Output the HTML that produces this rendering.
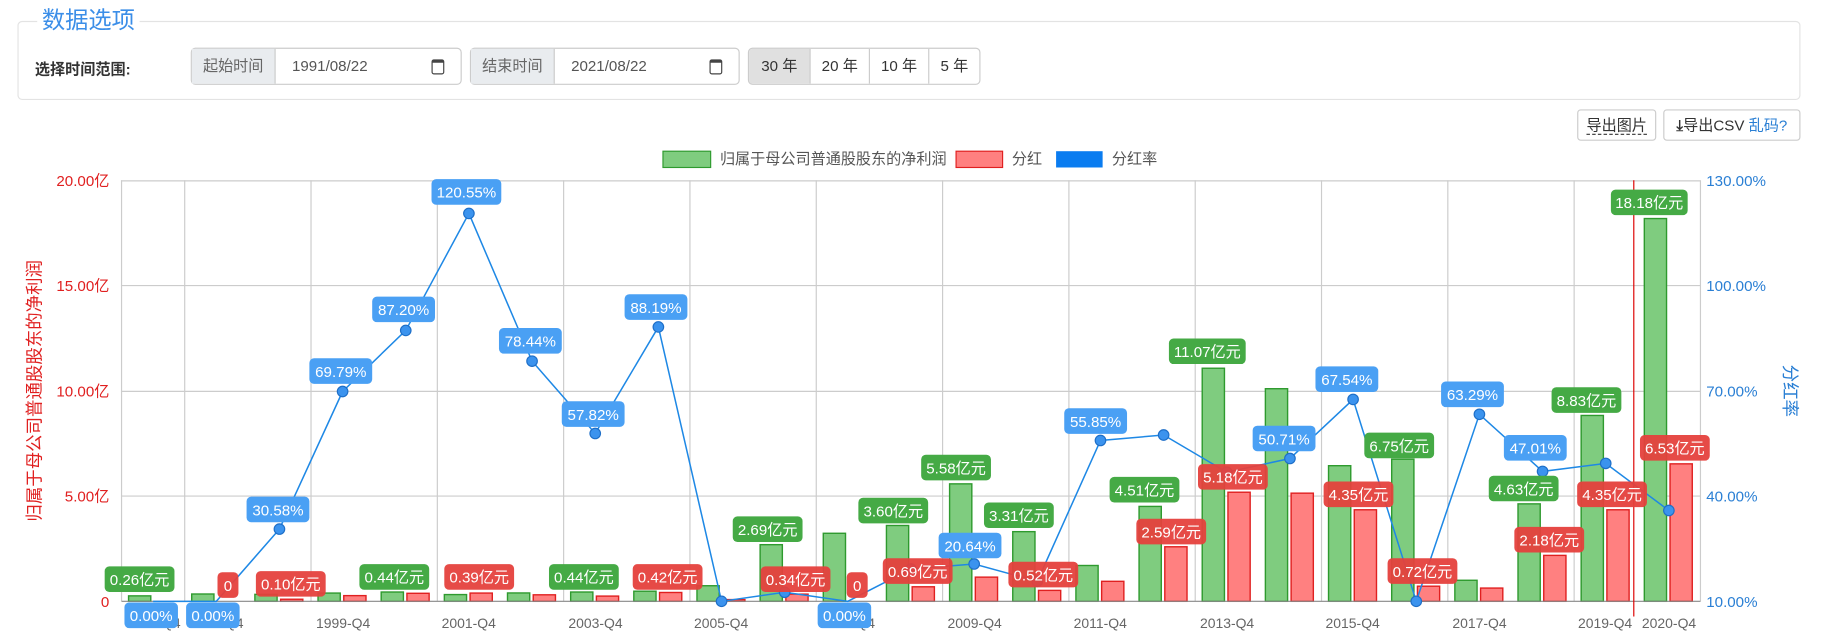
<!DOCTYPE html>
<html><head><meta charset="utf-8"><style>
*{box-sizing:border-box}
body{margin:0;background:#fff;width:1826px;height:643px;overflow:hidden;font-family:"Liberation Sans","Noto Sans CJK SC",sans-serif}
#w{position:absolute;left:0;top:0;width:1570px;height:553px;transform:scale(1.1631);transform-origin:0 0}
.fs{position:absolute;left:15px;top:18px;width:1533px;height:68px;border:1px solid #e3e3e3;border-radius:4px}
.lg{position:absolute;left:16px;top:-13px;background:#fff;padding:0 4px;color:#3b8ee8;font-size:20px;line-height:24px}
.lbl{position:absolute;left:30px;top:48px;font-size:13px;font-weight:bold;color:#333}
.ig{position:absolute;top:41px;height:32px;border:1px solid #ccc;border-radius:4px;display:flex;font-size:13px;color:#555;background:#fff}
.ig .a{background:#e9ecef;border-right:1px solid #ccc;width:72px;text-align:center;line-height:30px;color:#666}
.ig .v{padding-left:14px;line-height:30px;flex:1;position:relative}
.cal{position:absolute;right:14px;top:9px;width:11px;height:13px;border:1.5px solid #444;border-radius:2px;border-top-width:3px}
.bg{position:absolute;left:643px;top:41px;height:32px;display:flex;border:1px solid #ccc;border-radius:4px;overflow:hidden;font-size:13px;color:#333}
.bg div{line-height:30px;text-align:center;border-left:1px solid #ccc}
.bg div:first-child{border-left:0;background:#e0e0e0}
.btn{position:absolute;top:94px;height:27px;border:1px solid #ccc;border-radius:3px;font-size:13px;line-height:25px;color:#333;text-align:center}
</style></head><body><div id="w">
<div class="fs"><div class="lg">数据选项</div>
<div class="lbl" style="left:14px;top:30px">选择时间范围:</div></div>
<div class="ig" style="left:164px;width:233px"><div class="a">起始时间</div><div class="v">1991/08/22<span class="cal"></span></div></div>
<div class="ig" style="left:404px;width:232px"><div class="a">结束时间</div><div class="v">2021/08/22<span class="cal"></span></div></div>
<div class="bg"><div style="width:52px">30 年</div><div style="width:51px">20 年</div><div style="width:51px">10 年</div><div style="width:44px">5 年</div></div>
<div class="btn" style="left:1356px;width:68px"><span style="border-bottom:1px dashed #333">导出图片</span></div>
<div class="btn" style="left:1430px;width:118px"><span style="font-weight:bold">&#10515;</span>导出CSV <span style="color:#2a7fd4">乱码?</span></div>

<svg width="1570" height="553" style="position:absolute;left:0;top:0" font-family="Liberation Sans, Noto Sans CJK SC, sans-serif">
<g font-size="13" fill="#555">
<rect x="570" y="130" width="41" height="14" fill="#7fcc7f" stroke="#2e9a2e"/><text x="619" y="141">归属于母公司普通股股东的净利润</text>
<rect x="822" y="130" width="40" height="14" fill="#ff8080" stroke="#e02020"/><text x="870" y="141">分红</text>
<rect x="908" y="130" width="40" height="14" fill="#0a7cf0"/><text x="956" y="141">分红率</text>
</g>
<g stroke="#ccc" stroke-width="1">
<line x1="104" y1="155.5" x2="1462" y2="155.5"/><line x1="104" y1="245.5" x2="1462" y2="245.5"/><line x1="104" y1="336.5" x2="1462" y2="336.5"/><line x1="104" y1="426.5" x2="1462" y2="426.5"/>
</g>
<g font-size="13" fill="#e02020" text-anchor="end">
<text x="94" y="160">20.00亿</text><text x="94" y="250">15.00亿</text><text x="94" y="341">10.00亿</text><text x="94" y="431">5.00亿</text><text x="94" y="522">0</text></g>
<g font-size="13" fill="#2a7fd4"><text x="1467" y="160">130.00%</text><text x="1467" y="250">100.00%</text><text x="1467" y="341">70.00%</text><text x="1467" y="431">40.00%</text><text x="1467" y="522">10.00%</text></g>
<text transform="translate(35,336) rotate(-90)" text-anchor="middle" font-size="15" fill="#e02020">归属于母公司普通股股东的净利润</text>
<text transform="translate(1534,336) rotate(90)" text-anchor="middle" font-size="15" fill="#2a7fd4">分红率</text>
<g transform="translate(104.5,0) scale(1.00556,1) translate(-105,0)">
<g stroke="#ccc"><line x1="105" y1="155" x2="105" y2="517"/><line x1="159" y1="155" x2="159" y2="517"/><line x1="267" y1="155" x2="267" y2="517"/><line x1="375" y1="155" x2="375" y2="517"/><line x1="483" y1="155" x2="483" y2="517"/><line x1="591" y1="155" x2="591" y2="517"/><line x1="699" y1="155" x2="699" y2="517"/><line x1="807" y1="155" x2="807" y2="517"/><line x1="915" y1="155" x2="915" y2="517"/><line x1="1023" y1="155" x2="1023" y2="517"/><line x1="1131" y1="155" x2="1131" y2="517"/><line x1="1239" y1="155" x2="1239" y2="517"/><line x1="1347" y1="155" x2="1347" y2="517"/><line x1="1455" y1="155" x2="1455" y2="517"/></g>
<g fill="#7fcc7f" stroke="#2e9a2e" stroke-width="1.2">
<rect x="111" y="512.3" width="19" height="4.7"/><rect x="165" y="510.7" width="19" height="6.3"/><rect x="219" y="511" width="19" height="6"/><rect x="273" y="509.9" width="19" height="7.1"/><rect x="327" y="509" width="19" height="8"/><rect x="381" y="511.2" width="19" height="5.8"/><rect x="435" y="509.8" width="19" height="7.2"/><rect x="489" y="509" width="19" height="8"/><rect x="543" y="508.3" width="19" height="8.7"/><rect x="597" y="503.6" width="19" height="13.4"/><rect x="651" y="468.3" width="19" height="48.7"/><rect x="705" y="458.5" width="19" height="58.5"/><rect x="759" y="451.8" width="19" height="65.2"/><rect x="813" y="416" width="19" height="101"/><rect x="867" y="457.1" width="19" height="59.9"/><rect x="921" y="486.2" width="19" height="30.8"/><rect x="975" y="435.4" width="19" height="81.6"/><rect x="1029" y="316.6" width="19" height="200.4"/><rect x="1083" y="334.2" width="19" height="182.8"/><rect x="1137" y="400.4" width="19" height="116.6"/><rect x="1191" y="394.8" width="19" height="122.2"/><rect x="1245" y="498.9" width="19" height="18.1"/><rect x="1299" y="433.2" width="19" height="83.8"/><rect x="1353" y="357.2" width="19" height="159.8"/><rect x="1407" y="187.9" width="19" height="329.1"/>
</g>
<g fill="#ff8080" stroke="#e02020" stroke-width="1.2">
<rect x="241" y="515.2" width="19" height="1.8"/><rect x="295" y="512.1" width="19" height="4.9"/><rect x="349" y="510.1" width="19" height="6.9"/><rect x="403" y="509.9" width="19" height="7.1"/><rect x="457" y="511.4" width="19" height="5.6"/><rect x="511" y="512.5" width="19" height="4.5"/><rect x="565" y="509.4" width="19" height="7.6"/><rect x="619" y="515.5" width="19" height="1.5"/><rect x="673" y="510.8" width="19" height="6.2"/><rect x="781" y="504.5" width="19" height="12.5"/><rect x="835" y="496.2" width="19" height="20.8"/><rect x="889" y="507.6" width="19" height="9.4"/><rect x="943" y="499.8" width="19" height="17.2"/><rect x="997" y="470.1" width="19" height="46.9"/><rect x="1051" y="423.2" width="19" height="93.8"/><rect x="1105" y="424" width="19" height="93"/><rect x="1159" y="438.3" width="19" height="78.7"/><rect x="1213" y="504" width="19" height="13"/><rect x="1267" y="505.6" width="19" height="11.4"/><rect x="1321" y="477.5" width="19" height="39.5"/><rect x="1375" y="438.3" width="19" height="78.7"/><rect x="1429" y="398.8" width="19" height="118.2"/>
</g>
<line x1="105" y1="517" x2="1455" y2="517" stroke="#888"/>
<line x1="1398" y1="155" x2="1398" y2="530" stroke="#d00" stroke-width="1"/>
<polyline fill="none" stroke="#1e88e5" stroke-width="1.3" points="132,517 186,517 240,454.9 294,336.6 348,284.1 402,183.5 456,310.5 510,372.7 564,281.1 618,517 672,509.2 726,517 780,489.2 834,484.9 888,499.8 942,378.7 996,374 1050,406 1104,394.2 1158,343.4 1212,517 1266,356.2 1320,405.3 1374,398.4 1428,438.9"/>
<g fill="#3b93ee" stroke="#1e6fc8"><circle cx="240" cy="454.9" r="4.5"/><circle cx="294" cy="336.6" r="4.5"/><circle cx="348" cy="284.1" r="4.5"/><circle cx="402" cy="183.5" r="4.5"/><circle cx="456" cy="310.5" r="4.5"/><circle cx="510" cy="372.7" r="4.5"/><circle cx="564" cy="281.1" r="4.5"/><circle cx="618" cy="517" r="4.5"/><circle cx="672" cy="509.2" r="4.5"/><circle cx="780" cy="489.2" r="4.5"/><circle cx="834" cy="484.9" r="4.5"/><circle cx="888" cy="499.8" r="4.5"/><circle cx="942" cy="378.7" r="4.5"/><circle cx="996" cy="374" r="4.5"/><circle cx="1050" cy="406" r="4.5"/><circle cx="1104" cy="394.2" r="4.5"/><circle cx="1158" cy="343.4" r="4.5"/><circle cx="1212" cy="517" r="4.5"/><circle cx="1266" cy="356.2" r="4.5"/><circle cx="1320" cy="405.3" r="4.5"/><circle cx="1374" cy="398.4" r="4.5"/><circle cx="1428" cy="438.9" r="4.5"/></g>
</g>
<g font-size="12" fill="#666" text-anchor="middle">
<text x="132" y="540">1996-Q4</text><text x="186" y="540">1997-Q4</text><text x="295" y="540">1999-Q4</text><text x="403" y="540">2001-Q4</text><text x="512" y="540">2003-Q4</text><text x="620" y="540">2005-Q4</text><text x="729" y="540">2007-Q4</text><text x="838" y="540">2009-Q4</text><text x="946" y="540">2011-Q4</text><text x="1055" y="540">2013-Q4</text><text x="1163" y="540">2015-Q4</text><text x="1272" y="540">2017-Q4</text><text x="1380" y="540">2019-Q4</text><text x="1435" y="540">2020-Q4</text></g>
<g font-size="13" fill="#fff" text-anchor="middle">
<g fill="#45aa45"><rect x="90" y="487" width="60" height="22" rx="4"/><rect x="309" y="485" width="60" height="22" rx="4"/><rect x="472" y="485" width="60" height="22" rx="4"/><rect x="630" y="444" width="60" height="22" rx="4"/><rect x="738" y="428" width="60" height="22" rx="4"/><rect x="792" y="391" width="60" height="22" rx="4"/><rect x="846" y="432" width="60" height="22" rx="4"/><rect x="954" y="410" width="60" height="22" rx="4"/><rect x="1005" y="291" width="66" height="22" rx="4"/><rect x="1173" y="372" width="60" height="22" rx="4"/><rect x="1280" y="409" width="60" height="22" rx="4"/><rect x="1334" y="333" width="60" height="22" rx="4"/><rect x="1385" y="163" width="66" height="22" rx="4"/></g>
<g fill="#e5413d" opacity="0.95"><rect x="187" y="492" width="18" height="22" rx="4"/><rect x="220" y="491" width="60" height="22" rx="4"/><rect x="382" y="485" width="60" height="22" rx="4"/><rect x="544" y="485" width="60" height="22" rx="4"/><rect x="654" y="487" width="60" height="22" rx="4"/><rect x="728" y="492" width="18" height="22" rx="4"/><rect x="759" y="480" width="60" height="22" rx="4"/><rect x="867" y="483" width="60" height="22" rx="4"/><rect x="977" y="446" width="60" height="22" rx="4"/><rect x="1030" y="399" width="60" height="22" rx="4"/><rect x="1138" y="414" width="60" height="22" rx="4"/><rect x="1193" y="480" width="60" height="22" rx="4"/><rect x="1302" y="453" width="60" height="22" rx="4"/><rect x="1356" y="414" width="60" height="22" rx="4"/><rect x="1410" y="374" width="60" height="22" rx="4"/></g>
<g fill="#4aa0f4"><rect x="107" y="518" width="46" height="22" rx="4"/><rect x="160" y="518" width="46" height="22" rx="4"/><rect x="212" y="427" width="54" height="22" rx="4"/><rect x="266" y="308" width="54" height="22" rx="4"/><rect x="320" y="255" width="54" height="22" rx="4"/><rect x="371" y="154" width="60" height="22" rx="4"/><rect x="429" y="282" width="54" height="22" rx="4"/><rect x="483" y="345" width="54" height="22" rx="4"/><rect x="537" y="253" width="54" height="22" rx="4"/><rect x="703" y="518" width="46" height="22" rx="4"/><rect x="807" y="458" width="54" height="22" rx="4"/><rect x="915" y="351" width="54" height="22" rx="4"/><rect x="1077" y="366" width="54" height="22" rx="4"/><rect x="1131" y="315" width="54" height="22" rx="4"/><rect x="1239" y="328" width="54" height="22" rx="4"/><rect x="1293" y="374" width="54" height="22" rx="4"/></g>
<text x="120" y="503">0.26亿元</text><text x="339" y="501">0.44亿元</text><text x="502" y="501">0.44亿元</text><text x="660" y="460">2.69亿元</text><text x="768" y="444">3.60亿元</text><text x="822" y="407">5.58亿元</text><text x="876" y="448">3.31亿元</text><text x="984" y="426">4.51亿元</text><text x="1038" y="307">11.07亿元</text><text x="1203" y="388">6.75亿元</text><text x="1310" y="425">4.63亿元</text><text x="1364" y="349">8.83亿元</text><text x="1418" y="179">18.18亿元</text>
<text x="196" y="508">0</text><text x="250" y="507">0.10亿元</text><text x="412" y="501">0.39亿元</text><text x="574" y="501">0.42亿元</text><text x="684" y="503">0.34亿元</text><text x="737" y="508">0</text><text x="789" y="496">0.69亿元</text><text x="897" y="499">0.52亿元</text><text x="1007" y="462">2.59亿元</text><text x="1060" y="415">5.18亿元</text><text x="1168" y="430">4.35亿元</text><text x="1223" y="496">0.72亿元</text><text x="1332" y="469">2.18亿元</text><text x="1386" y="430">4.35亿元</text><text x="1440" y="390">6.53亿元</text>
<text x="130" y="534">0.00%</text><text x="183" y="534">0.00%</text><text x="239" y="443">30.58%</text><text x="293" y="324">69.79%</text><text x="347" y="271">87.20%</text><text x="401" y="170">120.55%</text><text x="456" y="298">78.44%</text><text x="510" y="361">57.82%</text><text x="564" y="269">88.19%</text><text x="726" y="534">0.00%</text><text x="834" y="474">20.64%</text><text x="942" y="367">55.85%</text><text x="1104" y="382">50.71%</text><text x="1158" y="331">67.54%</text><text x="1266" y="344">63.29%</text><text x="1320" y="390">47.01%</text>
</g>
</svg>
</div></body></html>
